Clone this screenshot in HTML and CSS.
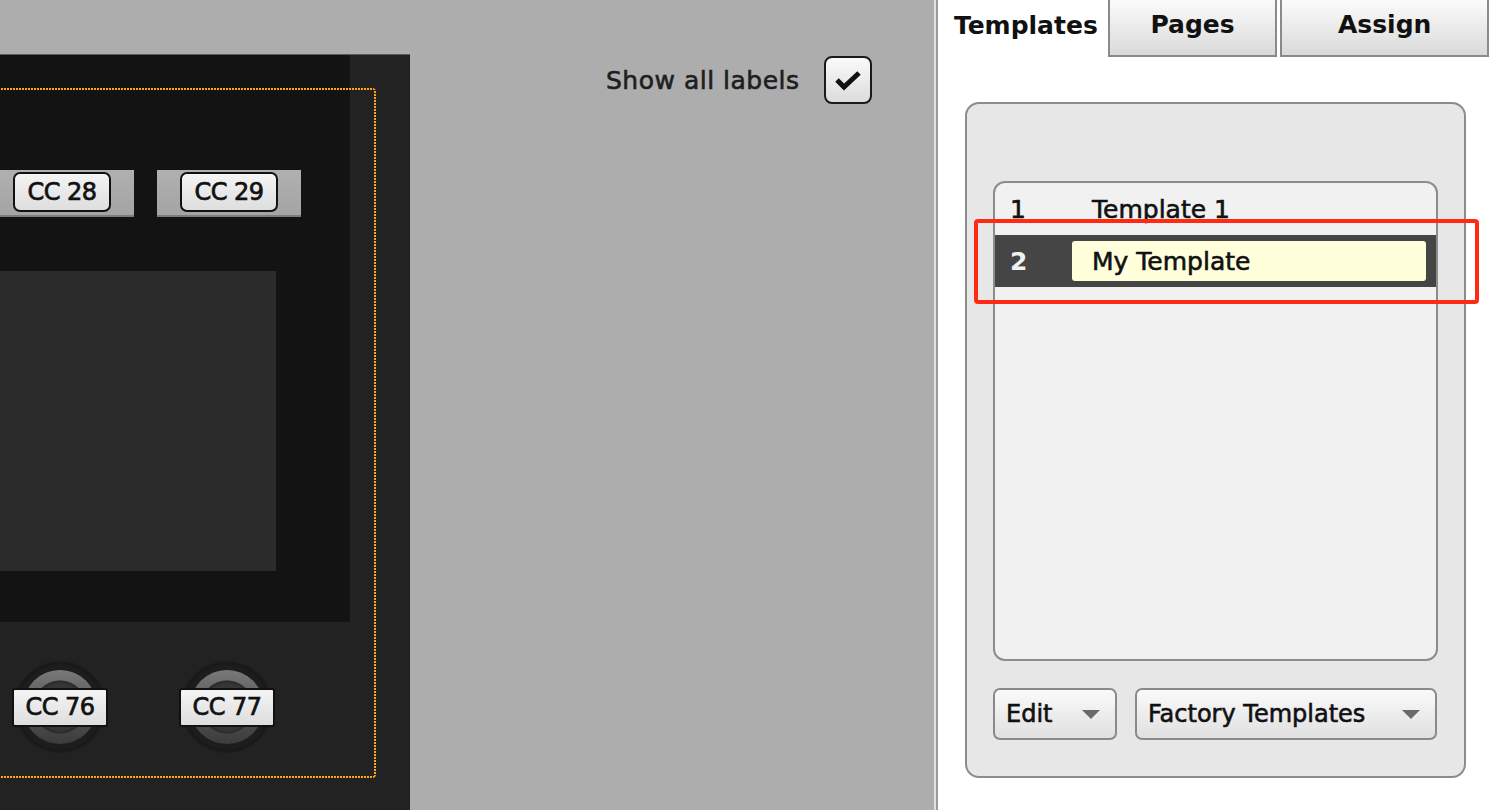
FILE: index.html
```html
<!DOCTYPE html>
<html lang="en">
<head>
    <meta charset="UTF-8">
    <title>Controller Editor - Templates</title>
    <link rel="stylesheet" href="styles.css">
</head>
<body>
    <div class="app">
        <main class="stage">
            <div class="device">
                <div class="deck">
                    <div class="plates">
                        <div class="plate"><span class="tag">CC 28</span></div>
                        <div class="plate"><span class="tag">CC 29</span></div>
                    </div>
                    <div class="screen"></div>
                </div>
                <div class="knobs">
                    <div class="knob"><div class="cap"><span class="tag flat">CC 76</span></div></div>
                    <div class="knob"><div class="cap"><span class="tag flat">CC 77</span></div></div>
                </div>
                <div class="focus-frame"></div>
            </div>
            <label class="show-labels">
                <span>Show all labels</span>
                <span class="check">
                    <svg width="28" height="22" viewBox="0 0 28 22"><path d="M3 11 L10 18 L25 4" fill="none" stroke="#111" stroke-width="5"/></svg>
                </span>
            </label>
        </main>
        <aside class="sidebar">
            <nav class="tabs">
                <div class="tab active">Templates</div>
                <div class="tab">Pages</div>
                <div class="tab wide">Assign</div>
            </nav>
            <section class="group">
                <ul class="list">
                    <li class="row"><span class="num">1</span><span class="name">Template 1</span></li>
                    <li class="row selected"><span class="num">2</span><span class="name editing">My Template</span></li>
                </ul>
                <div class="actions">
                    <button class="drop small">Edit<span class="arrow"></span></button>
                    <button class="drop big">Factory Templates<span class="arrow"></span></button>
                </div>
            </section>
            <div class="callout"></div>
        </aside>
    </div>
</body>
</html>
```

FILE: styles.css
```css
body {
    margin: 0;
    padding: 0;
    font-family: "DejaVu Sans", "Open Sans", sans-serif;
    overflow: hidden;
}
.app {
    display: flex;
    width: 1492px;
    height: 810px;
}
.stage {
    width: 934px;
    background-color: #adadad;
    display: flex;
    align-items: flex-start;
    overflow: hidden;
}
.device {
    position: relative;
    margin-top: 54px;
    width: 410px;
    height: 756px;
    background-color: #222222;
    border-top: 1px solid #5c5c5c;
    box-sizing: border-box;
    flex-shrink: 0;
}
.deck {
    width: 350px;
    height: 567px;
    background-color: #131313;
    padding-top: 115px;
    box-sizing: border-box;
}
.plates {
    display: flex;
    gap: 23px;
    margin-left: -10px;
}
.plate {
    width: 144px;
    height: 47px;
    background: linear-gradient(#b0b0b0, #a4a4a4);
    border-bottom: 2px solid #7c7c7c;
    box-sizing: border-box;
    display: flex;
    justify-content: center;
    padding-top: 2px;
}
.tag {
    width: 98px;
    height: 40px;
    flex-shrink: 0;
    box-sizing: border-box;
    border: 2px solid #111;
    border-radius: 7px;
    background: linear-gradient(#f4f4f4, #dedede);
    color: #111;
    font-size: 24px;
    -webkit-text-stroke: 0.7px #111;
    display: flex;
    align-items: center;
    justify-content: center;
    letter-spacing: -0.5px;
}
.tag.flat {
    border-radius: 3px;
    height: 39px;
    width: 96px;
}
.screen {
    margin-top: 54px;
    width: 276px;
    height: 300px;
    background-color: #2b2b2b;
}
.knobs {
    display: flex;
    gap: 73px;
    margin-left: 13px;
    margin-top: 38px;
}
.knob {
    width: 94px;
    height: 94px;
    border-radius: 50%;
    background: radial-gradient(circle, #1d1d1d 0 41px, #181818 44px, #222 47px);
    display: flex;
    align-items: center;
    justify-content: center;
}
.cap {
    width: 74px;
    height: 74px;
    border-radius: 50%;
    background: radial-gradient(circle, #363636 0 23px, #2a2a2a 26px, transparent 27px), linear-gradient(#7a7a7a, #585858 45%, #3c3c3c);
    display: flex;
    align-items: center;
    justify-content: center;
}
.focus-frame {
    position: absolute;
    left: -20px;
    top: 33px;
    width: 396px;
    height: 690px;
    border-radius: 4px;
    background:
        repeating-linear-gradient(90deg, #ffa814 0 2px, transparent 2px 3px) top left / 100% 2px no-repeat,
        repeating-linear-gradient(90deg, #ffa814 0 2px, transparent 2px 3px) bottom left / 100% 2px no-repeat,
        repeating-linear-gradient(#ffa814 0 2px, transparent 2px 3px) top right / 2px 100% no-repeat;
}
.show-labels {
    display: flex;
    align-items: center;
    gap: 24px;
    margin-left: 196px;
    margin-top: 56px;
    font-size: 25px;
    letter-spacing: 0.5px;
    color: #1e1e1e;
    -webkit-text-stroke: 0.6px #1e1e1e;
}
.check {
    width: 48px;
    height: 48px;
    box-sizing: border-box;
    border: 2px solid #1a1a1a;
    border-radius: 8px;
    background: linear-gradient(#fafafa, #dcdcdc);
    display: flex;
    align-items: center;
    justify-content: center;
}
.sidebar {
    position: relative;
    width: 558px;
    background-color: #fff;
    border-left: 2px solid #e2e2e2;
    box-shadow: inset 2px 0 0 #9a9a9a;
    box-sizing: border-box;
    padding-left: 2px;
}
.tabs {
    display: flex;
    height: 57px;
}
.tab {
    width: 170px;
    height: 57px;
    box-sizing: border-box;
    font-size: 25px;
    font-weight: bold;
    color: #111;
    display: flex;
    align-items: center;
    justify-content: center;
    padding-bottom: 7px;
    border: 2px solid #8a8a8a;
    border-top: none;
    background: linear-gradient(#fbfbfb, #dadada);
    margin-right: 3px;
}
.tab.active {
    background: #fff;
    border: none;
    margin-right: 0;
    padding-left: 6px;
}
.tab.wide {
    width: 209px;
}
.group {
    margin: 45px 0 0 27px;
    width: 501px;
    height: 676px;
    box-sizing: border-box;
    background-color: #e7e7e7;
    border: 2px solid #8c8c8c;
    border-radius: 14px;
    padding: 77px 0 0 26px;
}
.list {
    list-style: none;
    margin: 0;
    padding: 0;
    width: 445px;
    height: 480px;
    box-sizing: border-box;
    background-color: #f1f1f1;
    border: 2px solid #8c8c8c;
    border-radius: 12px;
    overflow: hidden;
}
.row {
    display: flex;
    align-items: center;
    height: 52px;
    font-size: 25px;
    color: #111;
    -webkit-text-stroke: 0.6px #111;
}
.row .num {
    width: 62px;
    padding-left: 15px;
}
.row .name {
    padding-left: 20px;
}
.row.selected {
    background-color: #454545;
}
.row.selected .num {
    color: #f0f0f0;
    font-weight: bold;
    -webkit-text-stroke: 0;
}
.name.editing {
    flex: 1;
    height: 40px;
    margin-right: 10px;
    background-color: #ffffdb;
    border-radius: 3px;
    display: flex;
    align-items: center;
}
.actions {
    display: flex;
    gap: 18px;
    margin-top: 27px;
}
.drop {
    height: 52px;
    box-sizing: border-box;
    border: 2px solid #8a8a8a;
    border-radius: 7px;
    background: linear-gradient(#fafafa, #e0e0e0);
    font-family: inherit;
    font-size: 24px;
    color: #111;
    -webkit-text-stroke: 0.6px #111;
    display: flex;
    align-items: center;
    justify-content: space-between;
    padding: 0 15px 0 11px;
}
.drop.small {
    width: 124px;
}
.drop.big {
    width: 302px;
}
.arrow {
    width: 0;
    height: 0;
    border-left: 9px solid transparent;
    border-right: 9px solid transparent;
    border-top: 9px solid #6a6a6a;
}
.callout {
    position: absolute;
    left: 38px;
    top: 219px;
    width: 505px;
    height: 85px;
    box-sizing: border-box;
    border: 4px solid #ff2a14;
    border-radius: 4px;
}
```
